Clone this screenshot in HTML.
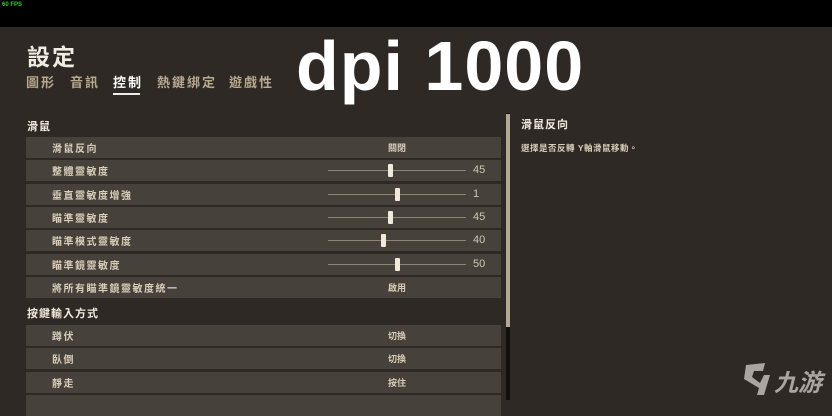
<!DOCTYPE html>
<html><head><meta charset="utf-8"><style>
*{margin:0;padding:0;box-sizing:border-box}
body{width:832px;height:400px;overflow:hidden;background:#2e2924;font-family:"Liberation Sans","Noto Sans CJK TC",sans-serif;position:relative}
.top{position:absolute;left:0;top:0;width:832px;height:27px;background:#000}
.fps{position:absolute;left:2px;top:2px;font-size:6px;color:#3c3;font-weight:bold}
.abs{position:absolute;white-space:nowrap}
.tab{position:absolute;top:72px;font-size:13px;color:#b8a98e;font-weight:bold;letter-spacing:2px}
.row{position:absolute;left:26px;width:475px;height:21px;background:#46413a}
.lbl{position:absolute;left:26px;top:3px;font-size:10px;color:#d8cdb8;font-weight:bold;letter-spacing:1.5px}
.val{position:absolute;left:362px;top:4px;font-size:9px;color:#d8cdb8;font-weight:bold}
.trk{position:absolute;left:302px;top:10px;width:138px;height:1px;background:#8e8575}
.th{position:absolute;top:4px;width:5px;height:13px;background:#f2ead8;border-radius:1px}
.num{position:absolute;left:447px;top:4px;font-size:11px;color:#cfc5b2}
</style></head><body>
<div class="top"><div class="fps">60 FPS</div></div>
<div class="abs" style="left:27px;top:38px;font-size:23px;color:#f0ebe3;font-weight:bold;letter-spacing:2px">設定</div>
<div class="tab" style="left:26px">圖形</div>
<div class="tab" style="left:70px">音訊</div>
<div class="tab" style="left:113px;color:#fff">控制</div>
<div class="tab" style="left:157px">熱鍵綁定</div>
<div class="tab" style="left:229px">遊戲性</div>
<div class="abs" style="left:113px;top:93px;width:27px;height:2px;background:#eee"></div>
<div class="abs" style="left:296px;top:31px;font-size:70px;line-height:1;color:#fff;font-weight:bold;letter-spacing:1px">dpi 1000</div>
<div class="abs" style="left:27px;top:118px;font-size:11px;color:#efe8dc;font-weight:bold;letter-spacing:1px">滑鼠</div>
<div class="row" style="top:137px"><div class="lbl">滑鼠反向</div><div class="val">關閉</div></div>
<div class="row" style="top:160px"><div class="lbl">整體靈敏度</div><div class="trk"></div><div class="th" style="left:362px"></div><div class="num">45</div></div>
<div class="row" style="top:184px"><div class="lbl">垂直靈敏度增強</div><div class="trk"></div><div class="th" style="left:369px"></div><div class="num">1</div></div>
<div class="row" style="top:207px"><div class="lbl">瞄準靈敏度</div><div class="trk"></div><div class="th" style="left:362px"></div><div class="num">45</div></div>
<div class="row" style="top:230px"><div class="lbl">瞄準模式靈敏度</div><div class="trk"></div><div class="th" style="left:355px"></div><div class="num">40</div></div>
<div class="row" style="top:254px"><div class="lbl">瞄準鏡靈敏度</div><div class="trk"></div><div class="th" style="left:369px"></div><div class="num">50</div></div>
<div class="row" style="top:277px"><div class="lbl">將所有瞄準鏡靈敏度統一</div><div class="val">啟用</div></div>
<div class="abs" style="left:27px;top:305px;font-size:11px;color:#efe8dc;font-weight:bold;letter-spacing:1px">按鍵輸入方式</div>
<div class="row" style="top:325px"><div class="lbl">蹲伏</div><div class="val">切換</div></div>
<div class="row" style="top:348px"><div class="lbl">臥倒</div><div class="val">切換</div></div>
<div class="row" style="top:372px"><div class="lbl">靜走</div><div class="val">按住</div></div>
<div class="row" style="top:395px"></div>
<div class="abs" style="left:506px;top:113px;width:4px;height:287px;background:#121110"></div>
<div class="abs" style="left:506px;top:114px;width:4px;height:213px;background:#b3a893"></div>
<div class="abs" style="left:521px;top:116px;font-size:11px;color:#efe8dc;font-weight:bold;letter-spacing:1px">滑鼠反向</div>
<div class="abs" style="left:521px;top:142px;font-size:8.5px;color:#d8cdb8;font-weight:bold;letter-spacing:.5px">選擇是否反轉 Y軸滑鼠移動。</div>
<svg class="abs" style="left:740px;top:355px" width="92" height="45" viewBox="0 0 92 45">
<path d="M6 10 L25 8 L23 16 L14 16 L12 22 L20 28 L24 20 L30 20 L24 40 L17 40 L19 33 L4 24 Z" fill="#a9a6a2"/>
<text x="34" y="36" font-size="24" font-weight="bold" font-style="italic" fill="#a9a6a2" font-family="Noto Sans CJK SC,sans-serif">九游</text>
</svg>
</body></html>
